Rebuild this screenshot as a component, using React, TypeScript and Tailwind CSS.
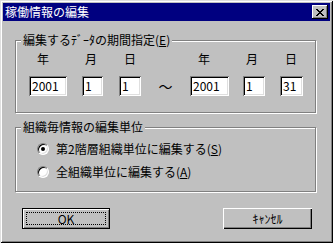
import React from 'react';

const font = "font-['Noto_Sans_CJK_JP',sans-serif]";

const Field = ({ value, w }: { value: string; w: string }) => (
  <div
    className={`${w} h-[20px] bg-white pl-[3px] text-[12px] leading-[20px] text-black shadow-[inset_1px_1px_#808080,inset_-1px_-1px_#fff,inset_2px_2px_#000,inset_-2px_-2px_#dfdfdf]`}
  >
    {value}
  </div>
);

const Radio = ({ checked }: { checked: boolean }) => (
  <div className="flex h-[12px] w-[12px] items-center justify-center rounded-full border border-t-[#808080] border-l-[#808080] border-b-white border-r-white bg-white shadow-[inset_1px_1px_#000,inset_-1px_-1px_#dfdfdf]">
    {checked && <div className="h-[4px] w-[4px] rounded-full bg-black" />}
  </div>
);

export default function App() {
  return (
    <div
      className={`${font} flex h-[243px] w-[333px] flex-col bg-[#c0c0c0] p-[3px] text-[12px] leading-[14px] text-black shadow-[inset_1px_1px_#dfdfdf,inset_-1px_-1px_#000,inset_2px_2px_#fff,inset_-2px_-2px_#808080]`}
    >
      {/* title bar */}
      <div className="flex h-[18px] items-center justify-between bg-[#000080] pl-[2px] pr-[2px]">
        <span className="text-[12px] text-white">稼働情報の編集</span>
        <div className="flex h-[14px] w-[16px] items-center justify-center bg-[#c0c0c0] shadow-[inset_-1px_-1px_#000,inset_1px_1px_#fff,inset_-2px_-2px_#808080]">
          <svg width="8" height="7" viewBox="0 0 8 7" shapeRendering="crispEdges">
            <path d="M0 0h2v1h-2zM6 0h2v1h-2zM1 1h2v1h-2zM5 1h2v1h-2zM2 2h4v1h-4zM3 3h2v1h-2zM2 4h4v1h-4zM1 5h2v1h-2zM5 5h2v1h-2zM0 6h2v1h-2zM6 6h2v1h-2z" fill="#000" />
          </svg>
        </div>
      </div>

      <div className="flex flex-col px-[12px]">
        {/* period group */}
        <fieldset className="mt-[12px] w-[301px] border border-[#808080] p-0 pb-[16px] shadow-[inset_1px_1px_#fff,1px_1px_#fff]">
          <legend className="ml-[5px] bg-[#c0c0c0] px-[2px]">
            編集するﾃﾞｰﾀの期間指定(<u>E</u>)
          </legend>
          <div className="mt-[5px] flex h-[14px]">
            <span className="ml-[21px]">年</span>
            <span className="ml-[36px]">月</span>
            <span className="ml-[27px]">日</span>
            <span className="ml-[62px]">年</span>
            <span className="ml-[36px]">月</span>
            <span className="ml-[27px]">日</span>
          </div>
          <div className="mt-[10px] flex items-center">
            <div className="ml-[13px]" />
            <Field value="2001" w="w-[38px]" />
            <div className="w-[15px]" />
            <Field value="1" w="w-[21px]" />
            <div className="w-[16px]" />
            <Field value="1" w="w-[22px]" />
            <div className="w-[49px] text-center text-[14px]">～</div>
            <Field value="2001" w="w-[39px]" />
            <div className="w-[14px]" />
            <Field value="1" w="w-[22px]" />
            <div className="w-[15px]" />
            <Field value="31" w="w-[23px]" />
          </div>
        </fieldset>

        {/* unit group */}
        <fieldset className="mt-[7px] w-[301px] border border-[#808080] p-0 pb-[11px] shadow-[inset_1px_1px_#fff,1px_1px_#fff]">
          <legend className="ml-[5px] bg-[#c0c0c0] px-[2px]">組織毎情報の編集単位</legend>
          <div className="ml-[21px] mt-[7px] flex h-[16px] items-center gap-[7px]">
            <Radio checked />
            <span>
              第2階層組織単位に編集する(<u>S</u>)
            </span>
          </div>
          <div className="ml-[21px] mt-[7px] flex h-[16px] items-center gap-[7px]">
            <Radio checked={false} />
            <span>
              全組織単位に編集する(<u>A</u>)
            </span>
          </div>
        </fieldset>

        {/* buttons */}
        <div className="mt-[16px] flex w-[301px] justify-between pl-[7px] pr-[4px]">
          <button className="flex h-[21px] w-[88px] items-center justify-center border border-black bg-[#c0c0c0] p-[3px] shadow-[inset_1px_1px_#fff,inset_-1px_-1px_#808080]">
            <div className="flex h-full w-full items-center justify-center border border-dotted border-black">
              OK
            </div>
          </button>
          <button className="flex h-[21px] w-[89px] items-center justify-center bg-[#c0c0c0] shadow-[inset_1px_1px_#fff,inset_-1px_-1px_#000,inset_-2px_-2px_#808080]">
            ｷｬﾝｾﾙ
          </button>
        </div>
      </div>
    </div>
  );
}
